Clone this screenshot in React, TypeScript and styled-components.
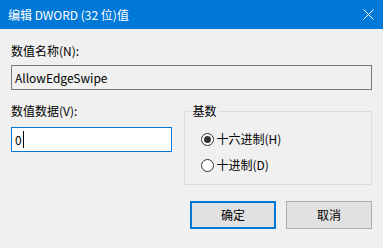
import styled, { createGlobalStyle } from 'styled-components';

const GlobalStyle = createGlobalStyle`
  html, body {
    margin: 0;
    padding: 0;
    background: #f0f0f0;
  }
  body {
    font-family: "Noto Sans CJK SC", "Noto Sans", sans-serif;
    font-size: 12px;
    color: #000;
  }
`;

const Window = styled.div`
  width: 383px;
  height: 248px;
  background: #f0f0f0;
  display: flex;
  flex-direction: column;
  overflow: hidden;
`;

const TitleBar = styled.div`
  height: 29px;
  flex: none;
  background: #0078d7;
  color: #fff;
  display: flex;
  align-items: center;
  justify-content: space-between;
  padding-left: 8px;
`;

const Title = styled.div`
  font-size: 12px;
  line-height: 16px;
  white-space: nowrap;
`;

const CloseButton = styled.div`
  width: 30px;
  height: 29px;
  display: flex;
  align-items: center;
  justify-content: center;
`;

const Body = styled.div`
  padding: 14px 11px 0;
  display: flex;
  flex-direction: column;
`;

const Label = styled.div`
  line-height: 16px;
  white-space: nowrap;
`;

const TextBox = styled.div<{ focused?: boolean }>`
  box-sizing: border-box;
  height: 25px;
  margin-top: ${({ focused }) => (focused ? '8px' : '6px')};
  border: 1px solid ${({ focused }) => (focused ? '#0078d7' : '#7a7a7a')};
  background: ${({ focused }) => (focused ? '#fff' : '#f0f0f0')};
  padding: 0 3px;
  display: flex;
  align-items: center;
  line-height: 16px;
`;

const Caret = styled.span`
  display: inline-block;
  width: 1px;
  height: 17px;
  background: #000;
  margin-left: 1px;
`;

const DataRow = styled.div`
  display: flex;
  align-items: flex-start;
  gap: 12px;
  margin-top: 13px;
`;

const DataColumn = styled.div`
  width: 161px;
  display: flex;
  flex-direction: column;
`;

const GroupBox = styled.fieldset`
  box-sizing: border-box;
  margin: 0;
  min-width: 0;
  width: 189px;
  border: 1px solid #dcdcdc;
  padding: 12px 8px 11px 8px;
  display: flex;
  flex-direction: column;
  gap: 10px;
`;

const Legend = styled.legend`
  padding: 0 2px;
  margin-left: -2px;
  line-height: 16px;
`;

const RadioRow = styled.div`
  display: flex;
  align-items: center;
  gap: 3px;
  margin-left: 8px;
  line-height: 16px;
  height: 16px;
`;

const RadioCircle = styled.span<{ checked?: boolean }>`
  box-sizing: border-box;
  width: 13px;
  height: 13px;
  border-radius: 50%;
  border: 1px solid #333;
  background: #fff;
  display: flex;
  align-items: center;
  justify-content: center;

  &::after {
    content: '';
    width: 7px;
    height: 7px;
    border-radius: 50%;
    background: ${({ checked }) => (checked ? '#333' : 'transparent')};
  }
`;

const ButtonRow = styled.div`
  display: flex;
  justify-content: flex-end;
  gap: 10px;
  margin-top: 16px;
`;

const Button = styled.div<{ primary?: boolean }>`
  box-sizing: border-box;
  width: 86px;
  height: 28px;
  background: #e1e1e1;
  border: ${({ primary }) => (primary ? '2px solid #0078d7' : '1px solid #adadad')};
  display: flex;
  align-items: center;
  justify-content: center;
  line-height: 16px;
`;

export default function App() {
  return (
    <>
      <GlobalStyle />
      <Window>
        <TitleBar>
          <Title>编辑 DWORD (32 位)值</Title>
          <CloseButton>
            <svg width="11" height="11" viewBox="0 0 11 11">
              <path d="M0.5 0.5 L10.5 10.5 M10.5 0.5 L0.5 10.5" stroke="#fff" strokeWidth="1" />
            </svg>
          </CloseButton>
        </TitleBar>
        <Body>
          <Label>数值名称(N):</Label>
          <TextBox>AllowEdgeSwipe</TextBox>
          <DataRow>
            <DataColumn>
              <Label>数值数据(V):</Label>
              <TextBox focused>
                0<Caret />
              </TextBox>
            </DataColumn>
            <GroupBox>
              <Legend>基数</Legend>
              <RadioRow>
                <RadioCircle checked />
                十六进制(H)
              </RadioRow>
              <RadioRow>
                <RadioCircle />
                十进制(D)
              </RadioRow>
            </GroupBox>
          </DataRow>
          <ButtonRow>
            <Button primary>确定</Button>
            <Button>取消</Button>
          </ButtonRow>
        </Body>
      </Window>
    </>
  );
}
